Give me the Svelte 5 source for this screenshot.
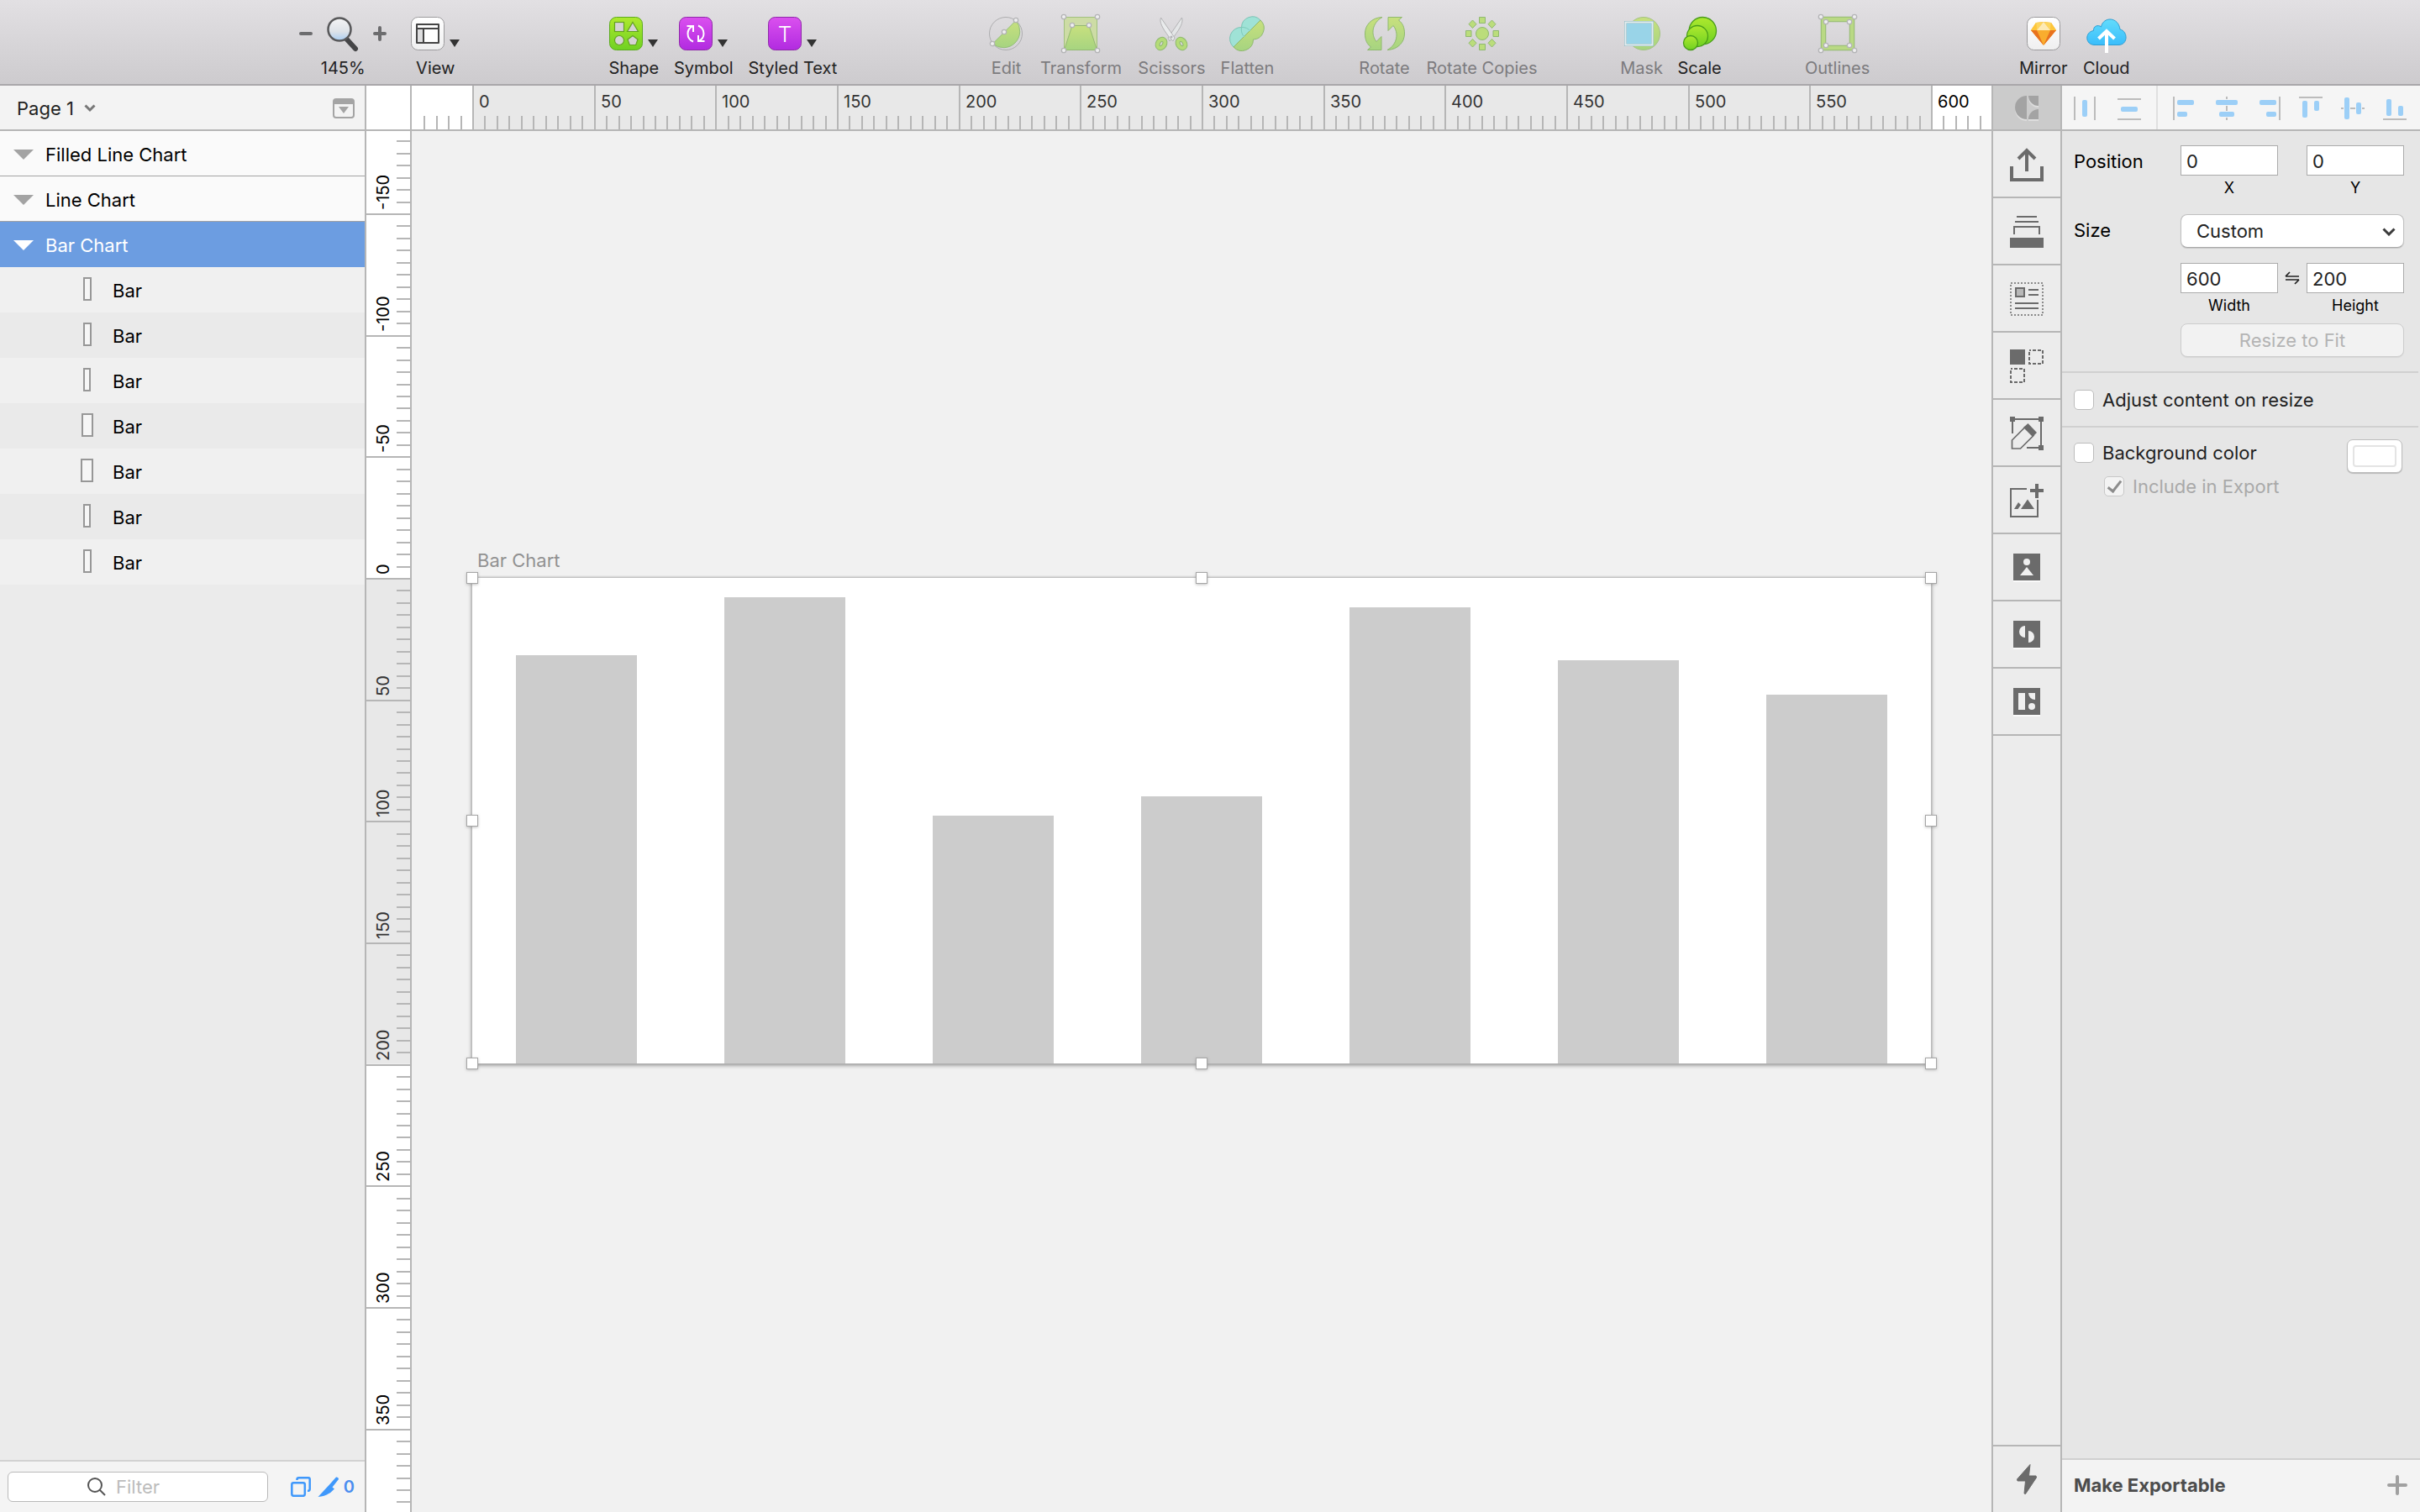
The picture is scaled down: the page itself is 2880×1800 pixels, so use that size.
<script>
  const scale = 2.8933;
  const originX = 72;
  const originY = 532;
  let canvasWidth = $state(1880);
  let canvasHeight = $state(1644);
  const range = (from, to, step) =>
    Array.from({ length: Math.floor((to - from) / step) + 1 }, (_, i) => from + i * step);
  const ticksX = $derived(range(-20, (canvasWidth - originX) / scale, 5));
  const ticksY = $derived(range(-180, (canvasHeight - originY) / scale, 5));
  const atX = (n) => Math.round(originX + n * scale);
  const atY = (n) => Math.round(originY + n * scale);

  const artboard = { name: 'Bar Chart', width: 600, height: 200 };
  const bars = [168, 192, 102, 110, 188, 166, 152];
  const layerIconWidths = [10, 10, 9, 14, 15, 9, 10];
  const handles = ['nw', 'n', 'ne', 'w', 'e', 'sw', 's', 'se'];

  const groups = [
    { space: 155, items: [
      { id: 'shape', label: 'Shape', width: 78, menu: true },
      { id: 'symbol', label: 'Symbol', width: 88, menu: true },
      { id: 'text', label: 'Styled Text', width: 124, menu: true }
    ] },
    { space: 164, items: [
      { id: 'edit', label: 'Edit', width: 56, off: true },
      { id: 'transform', label: 'Transform', width: 122, off: true },
      { id: 'scissors', label: 'Scissors', width: 94, off: true },
      { id: 'flatten', label: 'Flatten', width: 86, off: true }
    ] },
    { space: 80, items: [
      { id: 'rotate', label: 'Rotate', width: 80, off: true },
      { id: 'copies', label: 'Rotate Copies', width: 152, off: true }
    ] },
    { space: 80, items: [
      { id: 'mask', label: 'Mask', width: 68, off: true },
      { id: 'scale', label: 'Scale', width: 70 }
    ] },
    { space: 80, items: [{ id: 'outlines', label: 'Outlines', width: 98, off: true }] },
    { space: 158, items: [
      { id: 'mirror', label: 'Mirror', width: 76 },
      { id: 'cloud', label: 'Cloud', width: 74 }
    ] }
  ];

  const plugins = ['Export', 'Layer stack', 'Content', 'Duplicate', 'Edit artwork', 'Insert image', 'Person', 'Split', 'Layout'];

  const aligners = [
    { label: 'Distribute horizontally', lines: 'M1 0V28M25 0V28', bars: [[10, 4, 6, 20]] },
    { label: 'Distribute vertically', lines: 'M2 3H30M2 27H30', bars: [[6, 12, 20, 6]], last: true },
    { label: 'Align left', lines: 'M1 0V28', bars: [[5, 4, 20, 6], [5, 18, 12, 6]] },
    { label: 'Align centre', lines: 'M14 0V3M14 11V17M14 25V28', bars: [[1, 4, 26, 6], [5, 18, 18, 6]] },
    { label: 'Align right', lines: 'M27 0V28', bars: [[3, 4, 20, 6], [11, 18, 12, 6]] },
    { label: 'Align top', lines: 'M0 1H28', bars: [[4, 5, 6, 20], [18, 5, 6, 12]] },
    { label: 'Align middle', lines: 'M0 14H3M11 14H17M25 14H28', bars: [[4, 1, 6, 26], [18, 7, 6, 14]] },
    { label: 'Align bottom', lines: 'M0 27H28', bars: [[4, 3, 6, 20], [18, 11, 6, 12]] }
  ];
</script>

{#snippet handle(x, y)}
  <circle cx={x} cy={y} r="2.7" fill="#efeff0" stroke="#b4b4b6" stroke-width="1.3" />
{/snippet}

{#snippet toolIcon(id)}
  <svg class="icon" class:wide={id === 'rotate' || id === 'cloud'} class:mid={id === 'mask'} viewBox={id === 'rotate' || id === 'cloud' ? '0 0 48 40' : id === 'mask' ? '0 0 44 40' : '0 0 40 40'} aria-hidden="true">
    {#if id === 'view'}
      <rect x=".5" y=".5" width="39" height="39" rx="8" fill="url(#paper)" stroke="#9b9a9c" />
      <rect x="7" y="9" width="26" height="22" fill="#fff" />
      <path d="M7 14h8v17H7z" fill="#dededf" />
      <path d="M7 9H33V31H7ZM7 14H33M15 14V31" fill="none" stroke="#444" stroke-width="2" stroke-linejoin="round" />
    {:else if id === 'shape'}
      <rect x=".5" y=".5" width="39" height="39" rx="8" fill="url(#lime)" stroke="#5cab1f" />
      <g fill="#d5d3d5" stroke="#64a024" stroke-width="1.2">
        <rect x="6.5" y="6.5" width="11" height="11" />
        <path d="M28 6.500L34.500 17.500H21.500Z" />
        <circle cx="12" cy="28" r="5.500" />
        <path d="M28 22.500L34 27L31.700 33.500H24.300L22 27Z" />
      </g>
    {:else if id === 'symbol'}
      <rect x=".5" y=".5" width="39" height="39" rx="8" fill="url(#violet)" stroke="#8f2aa8" />
      <path d="M9.500 11H17V18M17 11Q10.500 13.500 10.500 20Q10.500 27 17 29.500M30.500 29H23V22M23 29Q29.500 26.500 29.500 20Q29.500 13 23 10.500" fill="none" stroke="#fff" stroke-width="2" />
    {:else if id === 'text'}
      <rect x=".5" y=".5" width="39" height="39" rx="8" fill="url(#violet)" stroke="#8f2aa8" />
      <text class="tee" x="20" y="30" text-anchor="middle">T</text>
    {:else if id === 'edit'}
      <circle cx="20" cy="20" r="19.500" fill="none" stroke="#adadaf" />
      <path d="M32 4.500A19.500 19.500 0 0 1 4.500 32Z" fill="url(#moss)" stroke="#94bf78" />
      {@render handle(32, 4)}{@render handle(18, 18)}{@render handle(4, 32)}
    {:else if id === 'transform'}
      <rect x=".5" y=".5" width="39" height="39" fill="#cddca5" stroke="#a1c07f" />
      <path d="M10 10.500H30L39.500 39.500H.5Z" fill="url(#moss)" stroke="#94b973" />
      {@render handle(0, 0)}{@render handle(40, 0)}{@render handle(10, 10)}{@render handle(30, 10)}{@render handle(0, 40)}{@render handle(40, 40)}
    {:else if id === 'scissors'}
      <path d="M32.500 1C34.500 6 31 13 23.500 23L18 29L16 25Z" fill="#e4e6e7" stroke="#b3b3b5" />
      <path d="M7.500 1C5.500 6 9 13 16.500 23L22 29L24 25Z" fill="#e9ebec" stroke="#b3b3b5" />
      <g fill="none" stroke="#8fb96f" stroke-width="6">
        <ellipse cx="8" cy="32" rx="4" ry="5.500" transform="rotate(30 8 32)" />
        <ellipse cx="32" cy="32" rx="4" ry="5.500" transform="rotate(-30 32 32)" />
      </g>
      <g fill="none" stroke="#b5dc78" stroke-width="4">
        <ellipse cx="8" cy="32" rx="4" ry="5.500" transform="rotate(30 8 32)" />
        <ellipse cx="32" cy="32" rx="4" ry="5.500" transform="rotate(-30 32 32)" />
      </g>
      <circle cx="20" cy="24" r="1.500" fill="#b3b3b5" />
    {:else if id === 'flatten'}
      <path d="M36 4A13 13 0 0 0 13.500 12.500A13.500 13.500 0 0 0 4 36Z" fill="#9fe2d6" stroke="#7cc4b6" />
      <path d="M36 4A13.300 13.300 0 0 1 27.500 27A13.500 13.500 0 0 1 4 36Z" fill="url(#moss)" stroke="#8fb96f" />
      <path d="M13.500 12.500Q20 12 24 17M13.500 12.500Q12.500 20 17 24" fill="none" stroke="#7fcabb" />
    {:else if id === 'rotate'}
      <g fill="url(#moss)" stroke="#8fb96f">
        <path d="M21 .5C8 1 .5 10 .5 20C.5 28 3 32.500 7.500 36L3.500 39.500H20V23.500L14 29.500C7 21 9 7 21 .5Z" />
        <path d="M27 39.500C40 39 47.500 30 47.500 20C47.500 12 45 7.500 40.500 4L44.500 .5H28V16.500L34 10.500C41 19 39 33 27 39.500Z" />
      </g>
    {:else if id === 'copies'}
      <g fill="#bbdd7b" stroke="#8fb96f">
        <circle cx="20" cy="20" r="7.500" />
        <path d="M16.500 .5h7v7h-7zM16.500 32.500h7v7h-7zM.5 16.500h6.500v7H.5zM33 16.500h6.500v7H33zM8.500 4L13 8.700L8.500 13.500L4 8.700ZM31.500 4L36 8.700L31.500 13.500L27 8.700ZM8.500 26.500L13 31.300L8.500 36L4 31.300ZM31.500 26.500L36 31.300L31.500 36L27 31.300Z" />
      </g>
    {:else if id === 'mask'}
      <circle cx="24" cy="20" r="19.500" fill="url(#moss)" stroke="#a3c283" />
      <rect x="2.500" y="6.500" width="32" height="27" fill="#99d4e8" stroke="#8ab3bc" stroke-width="3" />
      <rect x="2.500" y="6.500" width="32" height="27" fill="none" stroke="#e2edef" stroke-width="2" />
    {:else if id === 'scale'}
      <g fill="url(#lime)" stroke="#489c19" stroke-width="1.300">
        <circle cx="23.300" cy="16.700" r="16.200" />
        <circle cx="17" cy="23" r="12.500" />
        <circle cx="9" cy="31" r="8.500" />
      </g>
    {:else if id === 'outlines'}
      <rect x="3" y="3" width="34" height="34" fill="none" stroke="#94b973" stroke-width="6.500" />
      <rect x="3" y="3" width="34" height="34" fill="none" stroke="#b9d984" stroke-width="4.500" />
      {@render handle(0, 0)}{@render handle(40, 0)}{@render handle(0, 40)}{@render handle(40, 40)}
      {@render handle(6, 6)}{@render handle(34, 6)}{@render handle(6, 34)}{@render handle(34, 34)}
    {:else if id === 'mirror'}
      <rect x=".5" y=".5" width="39" height="39" rx="8" fill="url(#paper)" stroke="#9b9a9c" />
      <path d="M11 7L20 6L29 7L35 16L20 34L5 16Z" fill="#f9ad2e" />
      <path d="M5 16H12L20 34ZM35 16H28L20 34Z" fill="#e8721f" />
      <path d="M11 7L5 16H12ZM29 7L35 16H28Z" fill="#fdc63a" />
      <path d="M11 7L20 6L12 16ZM29 7L20 6L28 16Z" fill="#fdd55c" />
      <path d="M20 6L12 16H28Z" fill="#fdeab5" />
    {:else if id === 'cloud'}
      <path d="M10 33.500C-2 33.500-2 18 8.500 16.500C8 11 14 9 17.500 12C20-.5 38-.5 40 15C49.500 17 50 33.500 38 33.500Z" fill="url(#sky)" stroke="#2e9fd4" />
      <path d="M24 43V18M14.500 26L24 17L33.500 26" fill="none" stroke="#fff" stroke-width="4" />
    {/if}
  </svg>
{/snippet}

{#snippet pluginIcon(i)}
  <svg class="plugin-icon" viewBox="0 0 40 40" aria-hidden="true">
    {#if i === 0}
      <path d="M20 28V4M10 13L20 3L30 13M2 22V38H38V22" fill="none" stroke="#6b6b6b" stroke-width="4" />
    {:else if i === 1}
      <path d="M8 2H32M6 8H34M5 23V14H35V23" fill="none" stroke="#6b6b6b" stroke-width="2" />
      <path d="M0 27H40V39H0Z" fill="#6b6b6b" />
    {:else if i === 2}
      <rect x="1" y="1" width="38" height="38" fill="none" stroke="#8b8b8b" stroke-width="2" stroke-dasharray="2 2" />
      <rect x="7" y="7" width="10" height="10" fill="#b8b8b8" stroke="#6b6b6b" stroke-width="2" />
      <path d="M22 9H34M22 15H34M6 25H34M6 31H34" fill="none" stroke="#6b6b6b" stroke-width="2" />
    {:else if i === 3}
      <path d="M0 0H18V18H0Z" fill="#6b6b6b" />
      <path d="M23 1H39V17H23ZM1 23H17V39H1Z" fill="none" stroke="#6b6b6b" stroke-width="2" stroke-dasharray="4 2" stroke-dashoffset="2" />
    {:else if i === 4}
      <path d="M3 20V3H37V37H20" fill="none" stroke="#6b6b6b" stroke-width="2" />
      <path d="M0 0H6V6H0ZM34 0H40V6H34ZM34 34H40V40H34Z" fill="#6b6b6b" />
      <path d="M2.500 38V28L18 12.500L28 22.500L12.500 38Z" fill="none" stroke="#6b6b6b" stroke-width="1.700" />
      <path d="M21.500 8L32 19L27 24L16 13Z" fill="#6b6b6b" />
    {:else if i === 5}
      <path d="M20 6H1V39H33V19" fill="none" stroke="#6b6b6b" stroke-width="2" />
      <path d="M32 0V17M24 8H40" stroke="#6b6b6b" stroke-width="4" />
      <path d="M21 18.500L29 30H13ZM10 22L13 25L9.500 30H5Z" fill="#6b6b6b" />
    {:else}
      <path d="M4 33H36V37H4Z" fill="#fafafa" />
      <path d="M4 3H36V35H4Z" fill="#6b6b6b" />
      {#if i === 6}
        <circle cx="20" cy="13" r="4" fill="#f0f0f0" /><path d="M20 19L28 29H12Z" fill="#f0f0f0" />
      {:else if i === 7}
        <path d="M18 9A7 7 0 0 0 18 23ZM22 15A7 7 0 0 1 22 29Z" fill="#f0f0f0" />
      {:else}
        <path d="M10 9H18V29H10ZM22 9H30V17A8 8 0 0 1 22 9Z" fill="#f0f0f0" /><circle cx="26" cy="25" r="4" fill="#f0f0f0" />
      {/if}
    {/if}
  </svg>
{/snippet}

{#snippet tool(item)}
  <button class="tool" class:off={item.off} style="width: {item.width}px">
    <span class="tool-top">
      {@render toolIcon(item.id)}
      {#if item.menu}<svg class="caret" viewBox="0 0 12 10" aria-hidden="true"><path d="M0 0H12L6 9Z" /></svg>{/if}
    </span>
    <span class="tool-label">{item.label}</span>
  </button>
{/snippet}

<svg class="defs" aria-hidden="true">
  <defs>
    <linearGradient id="paper" x2="0" y2="1"><stop stop-color="#fff" /><stop offset="1" stop-color="#efeff0" /></linearGradient>
    <linearGradient id="lime" x2="0" y2="1"><stop stop-color="#aee92e" /><stop offset="1" stop-color="#6fd122" /></linearGradient>
    <linearGradient id="violet" x2="0" y2="1"><stop stop-color="#db50ef" /><stop offset="1" stop-color="#b12be0" /></linearGradient>
    <linearGradient id="moss" x2="0" y2="1"><stop stop-color="#c8e07e" /><stop offset="1" stop-color="#a6d480" /></linearGradient>
    <linearGradient id="sky" x2="0" y2="1"><stop stop-color="#62dcfc" /><stop offset="1" stop-color="#3abdfb" /></linearGradient>
    <linearGradient id="lens" x2="0" y2="1"><stop stop-color="#f4f4f5" /><stop offset=".6" stop-color="#dde2e8" /><stop offset="1" stop-color="#a9cdf2" /></linearGradient>
  </defs>
</svg>

<div class="app">
  <header class="toolbar">
    <i class="space" style="flex-grow: 356"></i>
    <div class="group spaced">
      <div class="zoom">
        <div class="zoom-row">
          <button aria-label="Zoom out"><svg width="16" height="40" viewBox="0 0 16 40"><path d="M2 20H14" /></svg></button>
          <svg width="48" height="40" viewBox="0 0 48 40" aria-hidden="true">
            <path d="M28 26L39 38" stroke="#454547" stroke-width="6" stroke-linecap="round" />
            <circle cx="20" cy="15" r="13.500" fill="url(#lens)" stroke="#58585a" stroke-width="2.500" />
          </svg>
          <button aria-label="Zoom in"><svg width="16" height="40" viewBox="0 0 16 40"><path d="M2 20H14M8 13V27" /></svg></button>
        </div>
        <span class="tool-label">145%</span>
      </div>
      {@render tool({ id: 'view', label: 'View', width: 84, menu: true })}
    </div>
    {#each groups as group}
      <i class="space" style="flex-grow: {group.space}"></i>
      <div class="group">
        {#each group.items as item}{@render tool(item)}{/each}
      </div>
    {/each}
    <i class="space" style="flex-grow: 336"></i>
  </header>

  <main class="body">
    <aside class="sidebar">
      <div class="page-bar">
        <button class="page-menu">Page 1
          <svg width="14" height="10" viewBox="0 0 14 10" aria-hidden="true"><path d="M1.500 1.500L7 7L12.500 1.500" fill="none" stroke="#777" stroke-width="3" /></svg>
        </button>
        <button aria-label="Page list">
          <svg width="26" height="24" viewBox="0 0 26 24" aria-hidden="true">
            <rect x="1" y="1" width="24" height="22" rx="3" fill="none" stroke="#a4a4a4" stroke-width="2" />
            <path d="M1 2H25V7H1ZM7 10H19L13 18Z" fill="#a4a4a4" />
          </svg>
        </button>
      </div>
      <ul class="layers">
        {#each ['Filled Line Chart', 'Line Chart', artboard.name] as name, i}
          <li class="row board" class:selected={i === 2}>
            <svg width="24" height="12" viewBox="0 0 24 12" aria-hidden="true"><path d="M0 0H24L12 12Z" /></svg>
            {name}
          </li>
        {/each}
        {#each layerIconWidths as w, i}
          <li class="row layer" class:even={i % 2 === 1}>
            <span class="thumb"><i style="width: {w}px"></i></span>
            Bar
          </li>
        {/each}
      </ul>
      <footer class="filter-bar">
        <label class="filter">
          <svg width="22" height="22" viewBox="0 0 22 22" aria-hidden="true"><circle cx="9" cy="9" r="8" /><path d="M14.500 14.500L21 21" /></svg>
          <input type="text" placeholder="Filter" aria-label="Filter layers" />
        </label>
        <button aria-label="Show slices">
          <svg width="24" height="24" viewBox="0 0 24 24" fill="none" stroke="#3f98fb" stroke-width="2.500" aria-hidden="true">
            <rect x="1.300" y="7.300" width="15.500" height="15.500" rx="2" /><path d="M7.500 4V3Q7.500 1.300 9.500 1.300H21Q22.700 1.300 22.700 3V14.500Q22.700 16.700 21 16.700H20" />
          </svg>
        </button>
        <button class="slices">
          <svg width="26" height="24" viewBox="0 0 26 24" aria-hidden="true"><path d="M22 .5Q25 0 25 3L17.500 12.500L20 14.500Q13 23 .5 24L13.500 10Z" fill="#3f98fb" /></svg>
          0
        </button>
      </footer>
    </aside>

    <div class="corner"></div>
    <svg class="ruler-x" aria-hidden="true">
      <rect class="span" x={originX} y="0" width={artboard.width * scale} height="52" />
      {#each ticksX as n}
        {#if n % 50 === 0}
          <rect class="tick" x={atX(n)} y="0" width="2" height="52" />
          <text class:inside={n < 600} x={atX(n) + 8} y="26">{n}</text>
        {:else}
          <rect class="tick" x={atX(n)} y="36" width="2" height="16" />
        {/if}
      {/each}
    </svg>
    <svg class="ruler-y" aria-hidden="true">
      <rect class="span" x="0" y={originY} width="52" height={artboard.height * scale} />
      {#each ticksY as n}
        {#if n % 50 === 0}
          <rect class="tick" x="0" y={atY(n)} width="52" height="2" />
          <text class:inside={n > 0 && n <= 200} transform="translate(27 {atY(n) - 4}) rotate(-90)">{n}</text>
        {:else}
          <rect class="tick" x="36" y={atY(n)} width="16" height="2" />
        {/if}
      {/each}
    </svg>

    <section class="canvas" bind:clientWidth={canvasWidth} bind:clientHeight={canvasHeight}>
      <div class="artboard" style="left: {originX}px; top: {originY}px; width: {Math.round(artboard.width * scale)}px; height: {Math.floor(artboard.height * scale)}px">
        <span class="artboard-name">{artboard.name}</span>
        <div class="chart">
          {#each bars as value}<i class="bar" style="height: {value / 2}%"></i>{/each}
        </div>
        {#each handles as h}<i class="handle {h}"></i>{/each}
      </div>
    </section>

    <nav class="plugins">
      <button class="brand" aria-label="Craft">
        <svg width="28" height="30" viewBox="0 0 28 30" aria-hidden="true">
          <path d="M14 2A14 14 0 0 0 14 30ZM16 2H28V14A12 12 0 0 1 16 2ZM28 18V30H16A12 12 0 0 1 28 18Z" fill="#dedede" />
          <path d="M14 0A14 14 0 0 0 14 28ZM16 0H28V12A12 12 0 0 1 16 0ZM28 16V28H16A12 12 0 0 1 28 16Z" fill="#a3a3a3" />
        </svg>
      </button>
      {#each plugins as name, i}
        <button aria-label={name}>{@render pluginIcon(i)}</button>
      {/each}
      <button class="bolt" aria-label="Run">
        <svg width="24" height="36" viewBox="0 0 24 36" aria-hidden="true"><path d="M16 .5L14.500 14H23L23.500 16L10.500 35.500L9 35L10.500 20H1L.5 18Z" fill="#6b6b6b" stroke="#6b6b6b" stroke-linejoin="round" /></svg>
      </button>
    </nav>

    <aside class="inspector">
      <div class="align-bar">
        {#each aligners as a}
          <button aria-label={a.label} class:last={a.last}>
            <svg width="28" height="28" viewBox="0 0 28 28" aria-hidden="true">
              <path d={a.lines} stroke="#bcbcbc" stroke-width="2" />
              {#each a.bars as [x, y, w, h]}<rect {x} {y} width={w} height={h} rx="2" fill="#9ccff7" />{/each}
            </svg>
          </button>
        {/each}
      </div>
      <div class="geometry">
        <span class="name">Position</span>
        <div class="pair">
          <input id="pos-x" type="text" value="0" /><span></span><input id="pos-y" type="text" value="0" />
          <label for="pos-x">X</label><span></span><label for="pos-y">Y</label>
        </div>
        <label class="name size-name" for="preset">Size</label>
        <div class="select">
          <select id="preset"><option>Custom</option></select>
          <svg width="16" height="10" viewBox="0 0 16 10" aria-hidden="true"><path d="M1.500 1.500L8 8L14.500 1.500" fill="none" stroke="#3c3c3c" stroke-width="3" /></svg>
        </div>
        <div class="pair size-pair">
          <input id="width" type="text" value="600" />
          <svg width="18" height="16" viewBox="0 0 18 16" aria-hidden="true"><path d="M1 6H17M1 6L6 1M1 10H17M17 10L12 15" fill="none" stroke="#222" stroke-width="1.700" /></svg>
          <input id="height" type="text" value="200" />
          <label for="width">Width</label><span></span><label for="height">Height</label>
        </div>
        <button class="fit" disabled>Resize to Fit</button>
      </div>
      <div class="option">
        <label><input type="checkbox" />Adjust content on resize</label>
      </div>
      <div class="option background">
        <label><input type="checkbox" />Background color</label>
        <button class="swatch" aria-label="Choose background color"><i></i></button>
        <label class="sub"><input type="checkbox" checked disabled />Include in Export</label>
      </div>
      <button class="export">Make Exportable
        <svg width="24" height="24" viewBox="0 0 24 24" aria-hidden="true"><path d="M12 2V22M2 12H22" stroke="#a0a0a0" stroke-width="4" stroke-linecap="round" /></svg>
      </button>
    </aside>
  </main>
</div>

<style>
  :global(body) { margin: 0; }
  .app {
    display: flex; flex-direction: column; height: 100vh; overflow: hidden;
    font-family: Inter, "Liberation Sans", sans-serif; font-size: 22px; line-height: 28px; color: #000;
    background: #f1f1f1;
  }
  .app :global(*) { box-sizing: border-box; }
  .defs { position: absolute; width: 0; height: 0; }
  svg { display: block; flex: none; }
  button { font: inherit; color: inherit; background: none; border: 0; padding: 0; margin: 0; }
  input, select { font: inherit; color: #222; margin: 0; }

  .toolbar {
    display: flex; align-items: flex-start; height: 102px; padding-top: 20px; flex: none;
    background: linear-gradient(#e2e0e3, #cdcbce); border-bottom: 2px solid #a9a7aa;
  }
  .space { flex: 1 1 0; }
  .group { display: flex; }
  .spaced { gap: 16px; }
  .zoom { width: 104px; display: flex; flex-direction: column; align-items: center; gap: 8px; }
  .zoom-row { display: flex; justify-content: space-between; align-self: stretch; }
  .zoom-row button svg { fill: none; stroke: #6c6c6e; stroke-width: 4; stroke-linecap: round; }
  .zoom-row > svg { overflow: visible; }
  .tool { display: flex; flex-direction: column; align-items: center; gap: 8px; }
  .tool-top { display: flex; align-items: flex-end; gap: 6px; }
  .tool-label { font-size: 20px; line-height: 26px; color: #222; white-space: nowrap; }
  .off .tool-label { color: #7c7b7e; }
  .icon { width: 40px; height: 40px; overflow: visible; }
  .icon.wide { width: 48px; }
  .icon.mid { width: 44px; }
  .tee { font-size: 26px; font-weight: 300; fill: #fff; }
  .caret { width: 12px; height: 10px; margin-bottom: 3px; fill: #333; }

  .body {
    flex: 1; min-height: 0; display: grid;
    grid-template-columns: 436px 54px minmax(0, 1fr) 84px 426px;
    grid-template-rows: 54px minmax(0, 1fr);
  }
  .sidebar { grid-row: 1 / 3; display: flex; flex-direction: column; background: #ebebeb; border-right: 2px solid #b6b6b6; }
  .page-bar {
    height: 54px; flex: none; display: flex; align-items: center; justify-content: space-between;
    padding: 2px 12px 0 20px; background: #f3f3f3; border-bottom: 2px solid #b6b6b6; color: #222;
  }
  .page-menu { display: flex; align-items: center; gap: 12px; }
  .layers { list-style: none; margin: 0; padding: 0; flex: 1; }
  .row { display: flex; align-items: center; height: 54px; padding-top: 2px; }
  .board { gap: 14px; padding-left: 16px; background: #fafafa; border-bottom: 1px solid #a4a4a4; }
  .board svg { fill: #a3a3a3; }
  .selected { background: #6c9de1; color: #fff; border: 0; }
  .selected svg { fill: #fff; }
  .layer { gap: 19px; padding-left: 92px; background: #f0f0f0; }
  .layer.even { background: #eaeaea; }
  .thumb { width: 23px; height: 28px; margin-bottom: 4px; display: flex; justify-content: center; }
  .thumb i { border: 2px solid #979797; background: #f6f6f6; }
  .filter-bar { height: 62px; flex: none; display: flex; align-items: center; padding: 0 12px 0 9px; background: #f4f4f4; border-top: 2px solid #d2d2d2; }
  .filter {
    flex: 1; min-width: 0; height: 36px; margin-right: 27px; display: flex; align-items: center; gap: 12px; padding-left: 94px;
    background: #fff; border: 1px solid #b9b9b9; border-radius: 6px;
  }
  .filter svg { fill: none; stroke: #555; stroke-width: 2; }
  .filter input { flex: 1; min-width: 0; border: 0; padding: 0; background: none; }
  .filter input::placeholder { color: #bcbcbc; opacity: 1; }
  .slices { display: flex; align-items: center; gap: 5px; margin-left: 8px; font-size: 20px; font-weight: 600; color: #4a8df0; }

  .corner { background: #fff; border-right: 2px solid #b6b6b6; border-bottom: 2px solid #b6b6b6; }
  .ruler-x { width: 100%; height: 54px; background: #fff; border-bottom: 2px solid #b6b6b6; }
  .ruler-y { width: 54px; height: 100%; background: #fff; border-right: 2px solid #b6b6b6; grid-column: 2; grid-row: 2; }
  .ruler-x text, .ruler-y text { font-size: 20px; fill: #000; }
  .ruler-x .inside, .ruler-y .inside { fill: #333; }
  .span { fill: #e8e8e8; }
  .tick { fill: #b6b6b6; }

  .canvas { grid-column: 3; grid-row: 2; position: relative; overflow: hidden; background: #f1f1f1; }
  .artboard { position: absolute; background: #fff; box-shadow: 0 0 2px 1px #b4b4b4, 0 2px 5px #888; }
  .artboard-name { position: absolute; left: 6px; bottom: 100%; margin-bottom: 7px; color: #929292; white-space: nowrap; }
  .chart { display: flex; justify-content: space-around; align-items: flex-end; height: 100%; }
  .bar { width: 8.333%; background: #ccc; }
  .handle { position: absolute; width: 14px; height: 14px; margin: -7px; background: #fff; border: 1px solid #a6a6a6; box-shadow: 0 1px 3px #8888; }
  .nw, .n, .ne { top: 0; }
  .w, .e { top: 50%; }
  .sw, .s, .se { top: 100%; }
  .nw, .w, .sw { left: 0; }
  .n, .s { left: 50%; }
  .ne, .e, .se { left: 100%; }

  .plugins {
    grid-column: 4; grid-row: 1 / 3; display: flex; flex-direction: column; background: #ececec;
    border-left: 2px solid #b6b6b6; border-right: 2px solid #b6b6b6;
  }
  .plugins button { height: 80px; padding-top: 2px; display: flex; align-items: center; justify-content: center; border-bottom: 2px solid #b6b6b6; }
  .plugins .brand { height: 54px; background: #cbcbcb; }
  .plugin-icon { width: 40px; height: 40px; }
  .plugins .bolt { margin-top: auto; padding: 0; border-bottom: 0; border-top: 2px solid #b6b6b6; }

  .inspector { grid-column: 5; grid-row: 1 / 3; display: flex; flex-direction: column; background: #e6e6e6; }
  .align-bar { height: 54px; flex: none; display: flex; align-items: stretch; gap: 22px; padding-left: 14px; background: #f5f5f5; border-bottom: 2px solid #b6b6b6; }
  .align-bar button { display: flex; align-items: center; padding-top: 2px; }
  .align-bar svg { overflow: visible; }
  .align-bar .last { padding-right: 20px; border-right: 2px solid #e0e0e0; margin-right: -4px; }
  .geometry {
    display: grid; grid-template-columns: minmax(0, 1fr) 266px; align-items: start;
    margin-right: 2px; padding: 17px 17px 17px 14px; border-bottom: 2px solid #d0d0d0;
  }
  .name { line-height: 38px; }
  .pair { display: grid; grid-template-columns: minmax(0, 1fr) 34px minmax(0, 1fr); justify-items: center; align-items: center; row-gap: 4px; height: 82px; align-content: start; }
  .pair input { width: 100%; height: 36px; padding: 1px 6px 0; border: 1px solid #ababab; border-radius: 0; background: #fff; }
  .pair label { font-size: 18px; line-height: 22px; }
  .select { position: relative; }
  .select select { appearance: none; width: 100%; height: 40px; padding: 0 18px; background: #fff; border: 1px solid #c0c0c0; border-bottom-color: #a8a8a8; border-radius: 8px; box-shadow: 0 1px 1px #0002; }
  .select svg { position: absolute; right: 10px; top: 16px; }
  .size-pair { grid-column: 2; margin-top: 18px; height: 72px; }
  .fit { grid-column: 2; height: 40px; border: 1px solid #cdcdcd; border-radius: 8px; background: #f2f2f2; color: #b4b4b4; box-shadow: 0 1px 1px #0001; }
  .option { padding: 18px 19px 17px 14px; margin-right: 2px; border-bottom: 2px solid #d0d0d0; color: #222; }
  .option label { display: flex; align-items: center; gap: 10px; }
  .option input { appearance: none; width: 24px; height: 24px; border: 1px solid #bcbcbc; border-radius: 5px; background: #fff; }
  .background { display: grid; grid-template-columns: minmax(0, 1fr) 66px; align-items: start; border: 0; padding-top: 14px; row-gap: 2px; }
  .background label { padding-top: 2px; }
  .option input:checked {
    background: #f3f3f3; border-color: #c8c8c8; display: grid; place-items: center;
  }
  .option input:checked::before { content: ""; width: 6px; height: 14px; margin-top: -4px; border: solid #8c8c8c; border-width: 0 3px 3px 0; transform: rotate(38deg); }
  .option .sub { padding: 0 0 0 36px; color: #a9a9a9; }
  .swatch { height: 40px; padding: 6px; border: 1px solid #bdbdbd; border-radius: 7px; background: #fff; box-shadow: 0 1px 1px #0003; }
  .swatch i { display: block; height: 26px; border: 2px solid #e4e4e4; border-radius: 4px; }
  .export {
    margin-top: auto; height: 64px; display: flex; align-items: center; justify-content: space-between; padding: 0 15px 2px 14px;
    background: #f3f3f3; border-top: 2px solid #d0d0d0; font-weight: 700; color: #4c4c4c;
  }
</style>
